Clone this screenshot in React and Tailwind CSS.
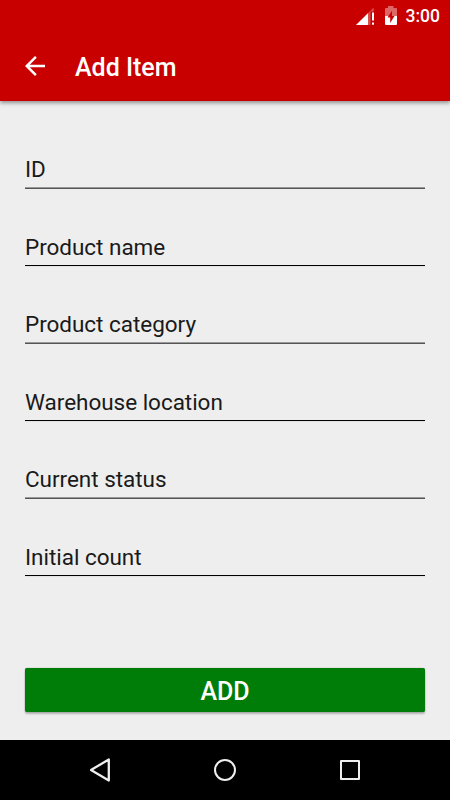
const fields = [
  { label: 'ID', soft: true },
  { label: 'Product name', soft: false },
  { label: 'Product category', soft: true },
  { label: 'Warehouse location', soft: false },
  { label: 'Current status', soft: true },
  { label: 'Initial count', soft: false },
];

function StatusBar() {
  return (
    <div className="flex h-[31px] items-start justify-end text-white">
      <svg className="mt-[7px] mr-[8px]" width="20" height="18" viewBox="0 0 20 18" fill="white">
        <path d="M17.7 0.5V4.500h-3.200v13.500H0z" opacity="0.3" />
        <path d="M0 18L12 6.200V18z" />
        <path d="M16 5.500h2v8h-2zM16 15.500h2v2.300h-2z" />
      </svg>
      <svg className="mt-[6px] mr-[8px]" width="14" height="20" viewBox="0 0 14 20" fill="white">
        <path d="M4 0h5.500v2H12q1 0 1 1v7H1V3q0-1 1-1h2z" opacity="0.4" />
        <path d="M1 10h12v8q0 1-1 1H2q-1 0-1-1z" />
        <path d="M8 4.800L3.500 11.500h2.700V17L10.500 10H8z" fill="#c80000" />
      </svg>
      <span className="mt-[6px] mr-[10px] text-[17.5px] leading-[21px] font-medium">3:00</span>
    </div>
  );
}

function Field({ label, soft }) {
  return (
    <div className="flex h-[77.5px] flex-col justify-end">
      <span className="mb-[4px] text-[22.5px] leading-[28px] tracking-[-0.03px] text-[#1a1a1a]">{label}</span>
      <div className={soft ? 'h-[2px] border-t border-[#999999] bg-[#555555]' : 'h-[2px] border-t border-black bg-[#e2e2e2]'} />
    </div>
  );
}

export default function App() {
  return (
    <div className="flex h-[800px] w-[450px] flex-col overflow-hidden bg-[#eeeeee] font-['Roboto',sans-serif]">
      <header className="h-[101px] shrink-0 bg-[#c80000] shadow-[0_2px_4px_rgba(0,0,0,0.4)]">
        <StatusBar />
        <div className="flex h-[70px] items-center pl-[25px] text-white">
          <svg width="20" height="20" viewBox="4 4 16 16" fill="currentColor">
            <path d="M20 11H7.830l5.590-5.590L12 4l-8 8 8 8 1.410-1.410L7.830 13H20v-2z" />
          </svg>
          <h1 className="ml-[30px] pt-[4px] text-[25px] leading-[30px] font-medium">Add Item</h1>
        </div>
      </header>
      <main className="flex flex-1 flex-col px-[25px] pt-[10.500px]">
        {fields.map((field) => (
          <Field key={field.label} label={field.label} soft={field.soft} />
        ))}
        <button className="mt-[91.500px] h-[44px] rounded-[2px] bg-[#007d08] pt-[4px] text-[25px] leading-[30px] font-medium text-white shadow-[0_0_1px_rgba(0,0,0,0.5),0_2px_2px_rgba(0,0,0,0.25)]">
          ADD
        </button>
      </main>
      <nav className="flex h-[60px] shrink-0 items-center justify-center bg-black">
        <svg width="270" height="30" viewBox="0 0 270 30" fill="none" stroke="#eeeeee" strokeWidth="2" strokeLinejoin="round">
          <path d="M18.800 4.500v21L1 15z" strokeWidth="2.300" />
          <circle cx="135" cy="15" r="10" />
          <rect x="251" y="6" width="18" height="18" />
        </svg>
      </nav>
    </div>
  );
}
